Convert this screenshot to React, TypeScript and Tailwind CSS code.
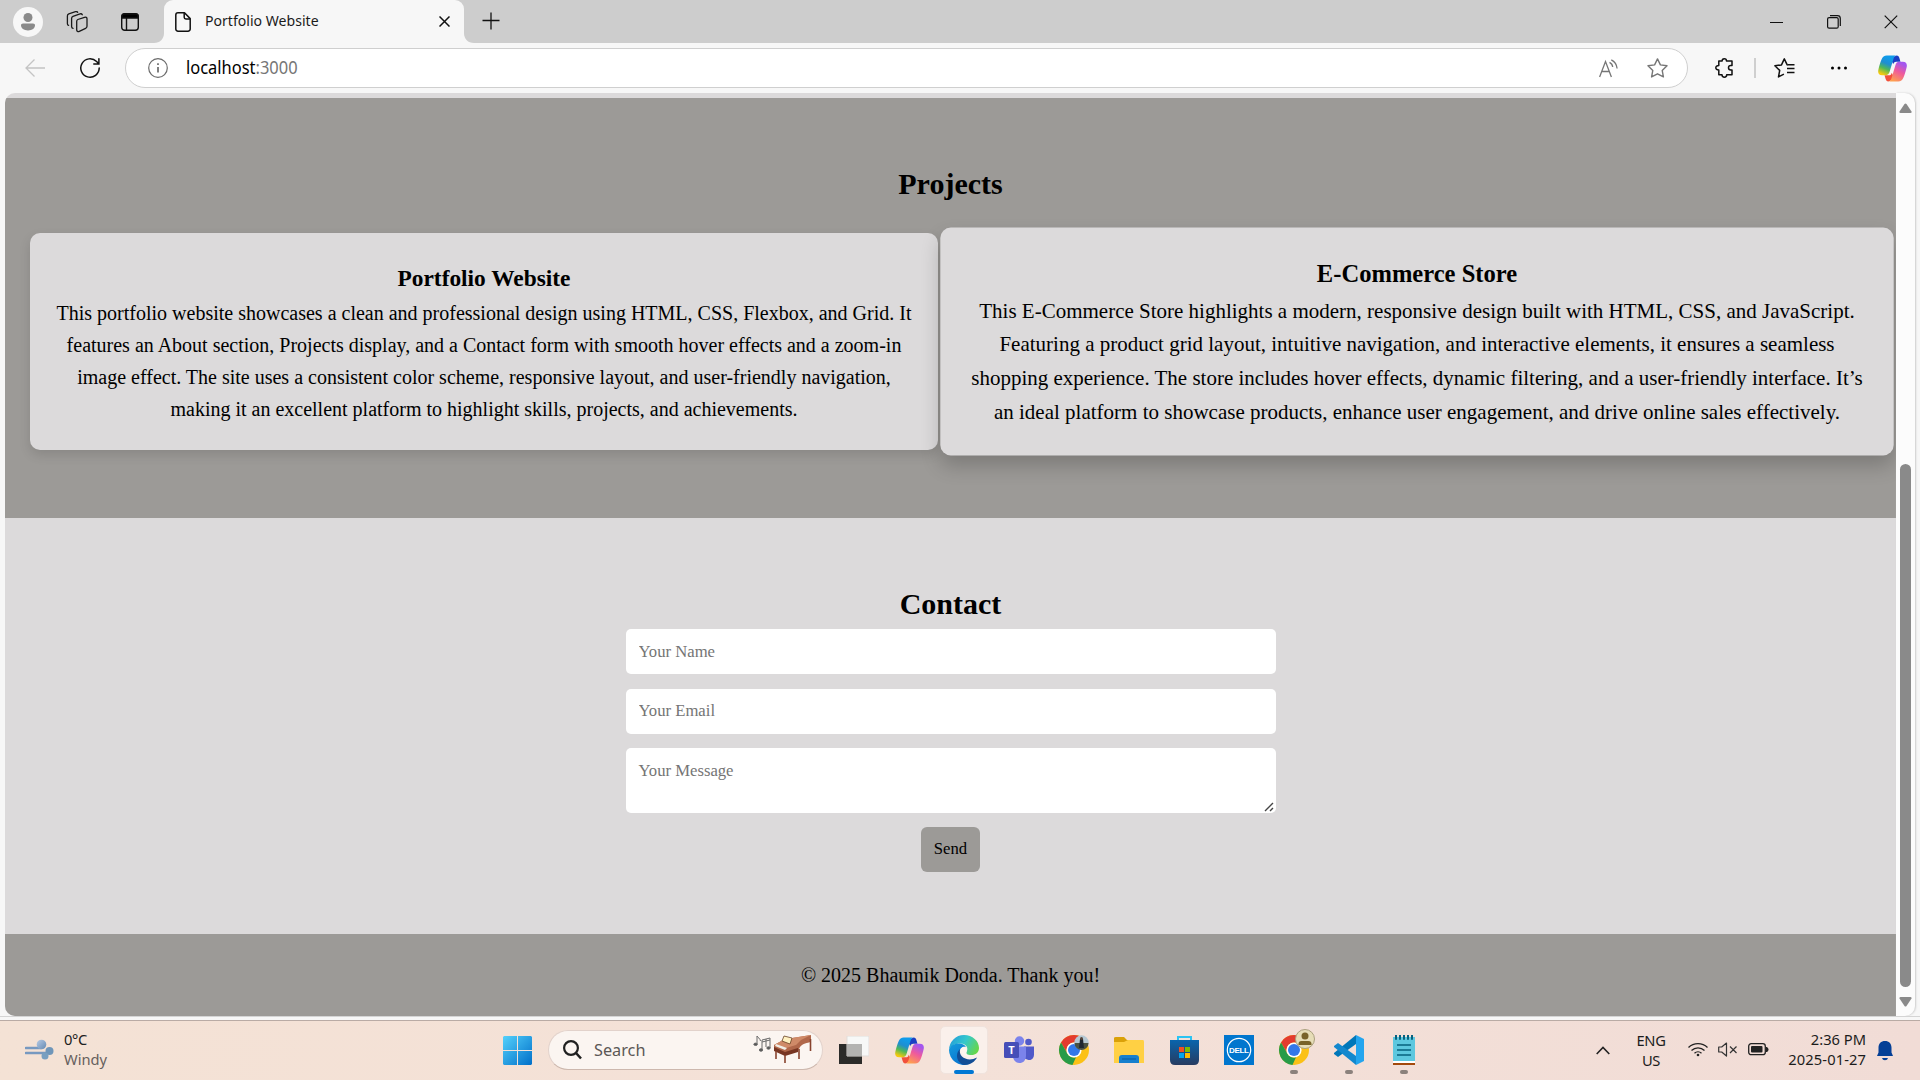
import React from "react";

const ui = "font-['Noto_Sans','Open_Sans',sans-serif]";

function CopilotLogo({ id, size }: { id: string; size: number }) {
  return (
    <svg width={size} height={size} viewBox="0 0 28 28" className="shrink-0">
      <defs>
        <linearGradient id={id + "a"} x1="0.6" y1="0" x2="0.2" y2="1">
          <stop offset="0.1" stopColor="#0f9bea" />
          <stop offset="0.4" stopColor="#1f8ed0" />
          <stop offset="0.65" stopColor="#4fb857" />
          <stop offset="0.95" stopColor="#f6c90e" />
        </linearGradient>
        <linearGradient id={id + "b"} x1="0.8" y1="0" x2="0.3" y2="1">
          <stop offset="0.1" stopColor="#a457ee" />
          <stop offset="0.5" stopColor="#ef5a9c" />
          <stop offset="1" stopColor="#ffa14d" />
        </linearGradient>
      </defs>
      <path d="M18 1.5c1.6 0 2.2 1 2.7 2.5l1 3.5h-4c-2 0-2.600 1-3 2.500L12 4Z" fill="#1a3fc4" />
      <path d="M10 26.500c-1.600 0-2.200-1-2.700-2.500l-1-3.500h4c2 0 2.600-1 3-2.500L16 24Z" fill="#f2503b" />
      <path d="M8.500 1.500h9.500c-1.800 0-2.600 1.600-3.100 3.300l-3.700 12.400c-.7 2.300-1.700 3.300-4 3.300H4C.8 20.500-.3 18.500.3 15.500c.6-3.200 1.900-7.300 3-10 1.200-2.900 2.700-4 5.200-4Z" fill={`url(#${id}a)`} />
      <path d="M19.500 26.500H10c1.800 0 2.600-1.600 3.100-3.300l3.700-12.400c.7-2.300 1.700-3.300 4-3.300H24c3.200 0 4.300 2 3.700 5-.6 3.200-1.900 7.300-3 10-1.200 2.900-2.700 4-5.200 4Z" fill={`url(#${id}b)`} />
    </svg>
  );
}

function TabStrip() {
  return (
    <div className="flex h-[43px] shrink-0 bg-[#cdcdcd]">
      <div className="flex w-[164px] items-center">
        <div className="ml-[13px] flex h-[30px] w-[30px] items-center justify-center rounded-full bg-[#f7f7f7]">
          <svg width="16" height="18" viewBox="0 0 16 18" fill="#8a8a8a">
            <circle cx="8" cy="4.500" r="4.500" />
            <path d="M3 10.500h10c1.200 0 2 .8 2 1.800 0 3-2.800 5.200-7 5.200s-7-2.200-7-5.200c0-1 .8-1.800 2-1.800Z" />
          </svg>
        </div>
        <svg className="ml-[23px]" width="23" height="22" viewBox="0 0 23 22" fill="none" stroke="#1a1a1a" strokeWidth="1.300" strokeLinejoin="round" strokeLinecap="round">
          <path d="m11.800 8.500 6.700-2.200c1.400-.4 2.500.2 2.500 1.500v7.400c0 1-.5 1.700-1.400 2.100l-6.300 3c-1.300.6-2.600 0-2.600-1.400v-8.500c0-1 .3-1.600 1.100-1.900Z" />
          <path d="M7 17.300c-1-.2-1.400-.9-1.400-1.800V7.400c0-1 .5-1.700 1.400-2.100l7-2.400c1-.3 1.900 0 2.300.8" />
          <path d="M2.600 14.400c-.9-.3-1.200-.9-1.200-1.700V5c0-1 .5-1.700 1.400-2.100l6.700-2.200c1-.3 1.800 0 2.200.6" />
        </svg>
        <svg className="ml-[32px]" width="18" height="18" viewBox="0 0 18 18" fill="none" stroke="#111" strokeWidth="1.400">
          <rect x="0.700" y="0.700" width="16.600" height="16.600" rx="3" />
          <path d="M1 3q0-2 2-2h12q2 0 2 2v2H1Z" fill="#000" />
          <path d="M5.500 5v12" />
        </svg>
      </div>
      <div className="relative flex w-[300px] items-center rounded-t-[9px] bg-[#f7f7f7]">
        <svg className="absolute bottom-0 -left-[10px]" width="10" height="10"><path d="M10 0v10H0C6 10 10 6 10 0Z" fill="#f7f7f7" /></svg>
        <svg className="absolute -right-[10px] bottom-0" width="10" height="10"><path d="M0 0v10h10C4 10 0 6 0 0Z" fill="#f7f7f7" /></svg>
        <svg className="ml-[11px]" width="16" height="20" viewBox="0 0 16 20" fill="none" stroke="#111" strokeWidth="1.500" strokeLinejoin="round">
          <path d="M3 .8h6.500l5.700 5.800V17a2.200 2.200 0 0 1-2.200 2.200H3A2.200 2.200 0 0 1 .8 17V3A2.200 2.200 0 0 1 3 .8Z" />
          <path d="M9.200 1v4.200c0 1.100.6 1.700 1.700 1.700H15" />
        </svg>
        <span className={`${ui} mb-[2px] ml-[14px] w-[234px] text-[14.600px] whitespace-nowrap text-[#1b1b1b]`}>
          <span className="inline-block origin-left scale-x-[0.965]">Portfolio Website</span>
        </span>
        <svg width="11" height="11" viewBox="0 0 11 11" stroke="#111" strokeWidth="1.500"><path d="m.5.5 10 10M10.500.5l-10 10" /></svg>
      </div>
      <svg className="mt-[12px] ml-[18px]" width="18" height="18" stroke="#111" strokeWidth="1.300"><path d="M9 .5v17M.5 8.500h17" /></svg>
      <div className="ml-auto flex items-center pr-[22px]">
        <svg width="13" height="14" stroke="#111" strokeWidth="1"><path d="M0 7.500h13" /></svg>
        <svg className="ml-[44px]" width="14" height="14" viewBox="0 0 14 14" fill="none" stroke="#111" strokeWidth="1.200">
          <rect x="0.600" y="2.600" width="10.600" height="10.600" rx="1.500" />
          <path d="M3 .7h7.500a2.800 2.800 0 0 1 2.800 2.800V11" />
        </svg>
        <svg className="ml-[43px]" width="14" height="14" stroke="#111" strokeWidth="1.200"><path d="m.7.700 12.500 12.500M13.200.7.700 13.200" /></svg>
      </div>
    </div>
  );
}

function Toolbar() {
  return (
    <div className="flex h-[50px] shrink-0 items-center bg-[#f7f7f7]">
      <svg className="ml-[25px]" width="20" height="18" viewBox="0 0 20 18" fill="none" stroke="#c4c4c4" strokeWidth="1.300"><path d="M9.500.5 1 9l8.500 8.500M1 9h19" /></svg>
      <svg className="ml-[35px]" width="20" height="20" viewBox="0 0 20 20" fill="none" stroke="#111" strokeWidth="1.500" strokeLinecap="round">
        <path d="M19.200 10a9.200 9.200 0 1 1-2.600-6.400L18.700 5.700M18.900.8v5.100h-5.100" />
      </svg>
      <div className="ml-[25px] flex h-[40px] w-[1563px] items-center rounded-full border border-[#cfcfcf] bg-white">
        <svg className="ml-[22px]" width="20" height="20" viewBox="0 0 20 20" fill="none" stroke="#6b6b6b" strokeWidth="1.200">
          <circle cx="10" cy="10" r="9.300" />
          <path d="M10 9v5.500M10 5.300v1.700" strokeWidth="1.700" />
        </svg>
        <span className={`${ui} mb-[2px] ml-[18px] w-[1413px] shrink-0 text-[17.500px] whitespace-nowrap text-black`}>
          <span className="inline-block origin-left scale-x-[0.94]">localhost<span className="text-[#767676]">:3000</span></span>
        </span>
        <svg className="shrink-0" width="20" height="19" viewBox="0 0 20 19" fill="none" stroke="#767676" strokeWidth="1.300">
          <path d="M.6 18 6.500 2.500 12.400 18M2.600 12.500h7.800M10.500 3.300c2 1 3 2.500 3.200 4.700M12.300.8c3.300 1.600 5.400 4.700 5.800 8.700" />
        </svg>
        <svg className="ml-[28px] shrink-0" width="21" height="20" viewBox="0 0 21 20" fill="none" stroke="#767676" strokeWidth="1.400" strokeLinejoin="round">
          <path d="m10.500.9 2.900 6 6.600.9-4.800 4.600 1.200 6.500-5.900-3.100-5.900 3.100 1.200-6.500L1 7.800l6.600-.9Z" />
        </svg>
      </div>
      <svg className="ml-[27px]" width="19" height="20" viewBox="0 0 19 20" fill="none" stroke="#111" strokeWidth="1.500" strokeLinejoin="round">
        <path d="M4.500 3h2.600c0-1.300.9-2.200 2.200-2.200s2.200.9 2.200 2.200H17v4.600h-1.200c-1.400 0-2.300.9-2.300 2.200s.9 2.200 2.300 2.200H17v4.800h-5.300c0 1.400-.9 2.400-2.300 2.400S7 18.200 7 16.800H3.800v-4.800C2 12 .8 11.200.8 9.800S2 7.600 3.800 7.600V3Z" />
      </svg>
      <div className="ml-[20px] h-[20px] w-[2px] bg-[#cfcfcf]" />
      <svg className="ml-[18px]" width="21" height="20" viewBox="0 0 21 20" fill="none" stroke="#111" strokeWidth="1.500" strokeLinejoin="round">
        <path d="M14 6.900l-.8-.1L10.300.9l-2.800 6-6.600.9 4.800 4.600-1.200 6.500 5.400-2.800M13 10.600h7.500M13 14.600h7.500M14 6.700h6.500" />
      </svg>
      <svg className="ml-[35px]" width="18" height="6"><circle cx="2.500" cy="3" r="1.500" /><circle cx="9" cy="3" r="1.500" /><circle cx="15.500" cy="3" r="1.500" /></svg>
      <div className="ml-[30px]"><CopilotLogo id="toolbar" size={29} /></div>
    </div>
  );
}

const portfolioText = [
  "This portfolio website showcases a clean and professional design using HTML, CSS, Flexbox, and Grid. It",
  "features an About section, Projects display, and a Contact form with smooth hover effects and a zoom-in",
  "image effect. The site uses a consistent color scheme, responsive layout, and user-friendly navigation,",
  "making it an excellent platform to highlight skills, projects, and achievements.",
];
const storeText = [
  "This E-Commerce Store highlights a modern, responsive design built with HTML, CSS, and JavaScript.",
  "Featuring a product grid layout, intuitive navigation, and interactive elements, it ensures a seamless",
  "shopping experience. The store includes hover effects, dynamic filtering, and a user-friendly interface. It’s",
  "an ideal platform to showcase products, enhance user engagement, and drive online sales effectively.",
];

function Project({ title, lines, raised }: { title: string; lines: string[]; raised?: boolean }) {
  return (
    <article className={`h-[217px] w-[908px] rounded-[10px] bg-[#dcdadb] text-center ${raised ? "z-10 scale-105 pt-[26px] shadow-[0_10px_19px_rgba(0,0,0,0.2)]" : "pt-[26.600px] shadow-[0_5px_12px_rgba(0,0,0,0.12)]"}`}>
      <h3 className="text-[23.400px] leading-[37.440px] font-bold">{title}</h3>
      {lines.map((line) => <p key={line} className="text-[20px] leading-[32px] whitespace-nowrap">{line}</p>)}
    </article>
  );
}

function Page() {
  return (
    <div className="flex h-[923px] shrink-0 bg-[#f7f7f7] pl-[5px]">
      <main className="flex w-[1891px] flex-col overflow-hidden rounded-l-[10px] bg-[#dcdadb] pt-[5px] font-['Liberation_Serif',serif] text-black">
        <section className="flex h-[420px] shrink-0 flex-col items-center bg-[#9c9a97] pt-[62px]">
          <h2 className="text-[30px] leading-[48px] font-bold">Projects</h2>
          <div className="mt-[25px] flex w-full gap-[25px] pl-[25px]">
            <Project title="Portfolio Website" lines={portfolioText} />
            <Project title="E-Commerce Store" lines={storeText} raised />
          </div>
        </section>
        <section className="flex h-[416px] shrink-0 flex-col items-center bg-[#dcdadb] pt-[62px]">
          <h2 className="mb-px text-[30px] leading-[48px] font-bold">Contact</h2>
          <form className="flex w-[650px] flex-col items-center">
            <input placeholder="Your Name" className="block h-[45px] w-full rounded-[5px] bg-white px-[13px] text-[16.670px] placeholder:text-[#757575]" />
            <input placeholder="Your Email" className="mt-[15px] block h-[45px] w-full rounded-[5px] bg-white px-[13px] pb-[2px] text-[16.670px] placeholder:text-[#757575]" />
            <div className="relative mt-[14px] h-[65px] w-full">
              <textarea placeholder="Your Message" className="block h-[65px] w-full resize-none rounded-[5px] bg-white px-[13px] py-[13px] text-[16.670px] leading-[19px] placeholder:text-[#757575]" />
              <svg className="absolute right-[2px] bottom-[1px]" width="10" height="10" stroke="#444" strokeWidth="1.400"><path d="M1 9 9 1M6 9l3-3" /></svg>
            </div>
            <button type="button" className="mt-[14px] h-[45px] w-[59px] rounded-[6px] bg-[#9c9a97] pb-[2px] text-[16.670px]">Send</button>
          </form>
        </section>
        <footer className="flex h-[82px] shrink-0 justify-center bg-[#9c9a97] pt-[25px] text-[20px] leading-[32px]">© 2025 Bhaumik Donda. Thank you!</footer>
      </main>
      <div className="flex w-[19px] flex-col items-center rounded-r-[10px] bg-[#fcfcfc] shadow-[1px_0_2px_#cccccc]">
        <svg className="mt-[10px]" width="13" height="11"><path d="M5.500 1Q6.500 0 7.500 1L12.500 8.500Q13 10 11.500 10H1.500Q0 10 .5 8.500Z" fill="#8a8a8a" /></svg>
        <div className="mt-[350px] h-[523px] w-[11px] rounded-full bg-[#8a8a8a]" />
        <svg className="mt-[10px]" width="13" height="11"><path d="M5.500 9Q6.500 10 7.500 9L12.500 1.500Q13 0 11.500 0H1.500Q0 0 .5 1.500Z" fill="#8a8a8a" /></svg>
      </div>
    </div>
  );
}

function PianoArt() {
  return (
    <svg width="60" height="30" viewBox="0 0 60 30" className="shrink-0">
      <g stroke="#6a6a6a" strokeWidth="1" fill="#555">
        <path d="M4 9V1c1 2 3 2 3.500 5M9 14V5l8-2v10M9 7l8-2M13 12V4" fill="none" />
        <ellipse cx="2.600" cy="9.300" rx="1.700" ry="1.200" /><ellipse cx="8" cy="15" rx="1.700" ry="1.200" /><ellipse cx="15.500" cy="13" rx="1.700" ry="1.200" />
      </g>
      <path d="m21 10 11-6 7-1 19-3v7c-4 1-8 1-11 5l-2 4-13 4-11-5Z" fill="#b0674a" />
      <path d="m21 10 11-6 7-1 19-3-10 5-5 5-10 3Z" fill="#cf8a68" />
      <path d="m21 12 11 5 13-4v4l-13 4-11-5Z" fill="#773522" />
      <path d="M23 16v8M32 20v8M46 14v10M57.500 4v12" stroke="#88442f" strokeWidth="1.600" />
      <path d="m23 9 11 4-2 2-10-4Z" fill="#f1eee7" />
      <path d="m31 1 8 2-2 6-8-3Z" fill="#fff0c0" stroke="#674023" strokeWidth=".8" />
    </svg>
  );
}

function Chrome({ children }: { children: React.ReactNode }) {
  return (
    <svg width="38" height="38" viewBox="0 0 38 38">
      <circle cx="16" cy="22" r="15" fill="#fbc116" />
      <path d="M3 14.500A15 15 0 0 1 29 14.500H16a7.500 7.500 0 0 0-6.500 11Z" fill="#e33b2e" />
      <path d="M3 14.500 9.500 25.800A7.500 7.500 0 0 0 18 29.200L14.500 37A15 15 0 0 1 3 14.500Z" fill="#289b48" />
      <circle cx="16" cy="22" r="7.600" fill="white" /><circle cx="16" cy="22" r="6" fill="#3478e8" />
      {children}
    </svg>
  );
}

function Edge() {
  return (
    <svg width="30" height="30" viewBox="0 0 30 30">
      <defs>
        <linearGradient id="edgeTop" x1="0" y1=".2" x2="1" y2=".6"><stop stopColor="#239bdb" /><stop offset=".5" stopColor="#35c8cc" /><stop offset="1" stopColor="#65d64b" /></linearGradient>
        <linearGradient id="edgeLeft" x1="0" y1="0" x2=".6" y2="1"><stop stopColor="#159ddd" /><stop offset="1" stopColor="#0873cf" /></linearGradient>
      </defs>
      <path d="M0 15A15 15 0 0 1 15 0c8.500 0 15 6 15 13 0 4.500-3.500 7-7.500 7-4.500 0-6-1.500-5-3 2.500-4-.5-8.500-6-8.500C6 8.500 1 11 0 15Z" fill="url(#edgeTop)" />
      <path d="M0 15c1-5 6-7 11-6.500 3 .3 5 1.800 6 3.500-3.500-1-6.500 1.500-6.500 5.500 0 6 4 11 9 11.700A15 15 0 0 1 0 15Z" fill="url(#edgeLeft)" />
      <path d="M11 14c-2 8 8 13.500 17 8.500-2 4-6.500 7.500-13 7.500-7-2-9.500-11-4-16Z" fill="#124e96" />
      <path d="M15 12c-2.500 0-3.500 2-3 4.500.8 4 6 6.500 11 4.500-4 0-6.500-1.500-5.500-4 .8-2 .5-4-2.500-5Z" fill="#fff5ef" />
    </svg>
  );
}

function Teams() {
  return (
    <svg width="30" height="28" viewBox="0 0 30 28">
      <circle cx="24.500" cy="6" r="3.300" fill="#5059c9" /><path d="M20 10.500h10v8c0 4-3 6-5.500 5.500L19 22Z" fill="#5059c9" />
      <circle cx="15.500" cy="5" r="4.700" fill="#7b83eb" /><path d="M9 10.500h13v9c0 5-3 7.500-6.500 7.500S9 24 9 20Z" fill="#7b83eb" />
      <rect y="6" width="15" height="16" rx="1.500" fill="#464eb8" />
      <text x="7.500" y="18" textAnchor="middle" fill="white" fontFamily="Open Sans, sans-serif" fontWeight="700" fontSize="11">T</text>
    </svg>
  );
}

function TaskIcon({ children, indicator = false, active = false }: { children: React.ReactNode; indicator?: boolean; active?: boolean }) {
  return (
    <div className={`relative flex h-[48px] w-[48px] shrink-0 items-center justify-center rounded-[5px] ${active ? "border border-[#f0e3dd] bg-[#faf0eb]" : ""}`}>
      {children}
      {active && <div className="absolute -bottom-px h-[4px] w-[20px] rounded-full bg-[#0078d4]" />}
      {indicator && <div className="absolute bottom-0 h-[4px] w-[8px] rounded-full bg-[#8b817c]" />}
    </div>
  );
}

function Taskbar() {
  return (
    <div className={`${ui} flex h-[60px] shrink-0 border-t border-[#b9aba5] bg-linear-to-r from-[#f4e2d5] via-[#f4e1d8] to-[#f1dcd6] text-[15px]`}>
      <div className="flex w-[500px] shrink-0 pl-[25px]">
        <svg className="mt-[18px]" width="29" height="21" viewBox="0 0 29 21">
          <defs><linearGradient id="wind" x1="0" y1="0" x2="1" y2="1"><stop stopColor="#b7cbe5" /><stop offset="1" stopColor="#6389b2" /></linearGradient></defs>
          <path d="M1 9h15M1 14h20" stroke="#7799c0" strokeWidth="2.600" strokeLinecap="round" />
          <circle cx="16.500" cy="5.500" r="4.800" fill="url(#wind)" /><circle cx="24.500" cy="12" r="4" fill="#6f96b9" /><circle cx="20" cy="17" r="3.500" fill="#789fc0" />
        </svg>
        <div className="mt-[8px] ml-[10px] text-[14.700px] leading-[20px] text-[#202020]"><div className="-tracking-[.4px]">0°C</div><div className="text-[#66605d]">Windy</div></div>
      </div>
      <div className="flex shrink-0 pt-[5px]">
        <svg className="mt-[10px] ml-[3px] shrink-0" width="29" height="29"><defs><linearGradient id="win" x1="0" y1="0" x2="1" y2="1"><stop stopColor="#54d1fb" /><stop offset="1" stopColor="#006fc9" /></linearGradient></defs><path d="M1 0h13v14H0V1ZM15 0h13l1 1v13H15ZM0 15h14v14H1l-1-1ZM15 15h14v13l-1 1H15Z" fill="url(#win)" /></svg>
        <div className="mt-[4px] ml-[16px] flex h-[40px] w-[275px] shrink-0 items-center rounded-full border border-[#e2d2cb] border-b-[#cdb8ae] bg-[#fbf5f1]">
          <svg className="ml-[14px] shrink-0" width="19" height="20" viewBox="0 0 19 20" fill="none" stroke="#202020" strokeWidth="2.200"><circle cx="8" cy="8" r="6.900" /><path d="m13 13 5 5.500" strokeWidth="2.600" /></svg>
          <span className="ml-[12px] w-[159px] shrink-0 text-[16.500px] text-[#5c5856]"><span className="inline-block origin-left scale-x-[0.985]">Search</span></span>
          <PianoArt />
        </div>
        <div className="ml-[7px] flex gap-[7px]">
          <TaskIcon><svg width="30" height="28"><path d="M0 8h23v20H0Z" fill="#2b2b29" /><path d="M8 0h22v20H8Z" fill="#f7f8f7" stroke="#e1ddda" /><path d="M8 8h15v12H8Z" fill="#b3b3b1" /></svg></TaskIcon>
          <TaskIcon><CopilotLogo id="dock" size={29} /></TaskIcon>
          <TaskIcon active><Edge /></TaskIcon>
          <TaskIcon><Teams /></TaskIcon>
          <TaskIcon>
            <div className="-mt-[6px] ml-[6px]"><Chrome><circle cx="23.500" cy="14.500" r="7.200" fill="#b5c7d2" /><path d="M16.500 15h14a7 7 0 0 1-14 0Z" fill="#4a5142" /><path d="M22 11h3l1 9h-5Z" fill="#202831" /><circle cx="23.500" cy="10.500" r="1.500" fill="#554238" /></Chrome></div>
          </TaskIcon>
          <TaskIcon><svg width="30" height="27"><path d="M0 1q0-1 2-1h8l3 3h16v8H0Z" fill="#daa109" /><path d="M0 5h10l4-2h15q1 0 1 2v21H0Z" fill="#ffd044" /><path d="M5 26v-5q0-3 3-3h14q3 0 3 3v5Z" fill="#167fce" /><path d="M8 22h14" stroke="#075b9f" /></svg></TaskIcon>
          <TaskIcon>
            <svg width="29" height="29"><defs><linearGradient id="store" x1="0" y1="0" x2="0" y2="1"><stop stopColor="#0965ad" /><stop offset="1" stopColor="#273b60" /></linearGradient></defs><path d="M8 5V1h13v4" fill="none" stroke="#2cc3f2" strokeWidth="2" /><path d="M0 4h29v20q0 5-5 5H5q-5 0-5-5Z" fill="url(#store)" /><path d="M9 11h5v5H9Z" fill="#f15022" /><path d="M15 11h5v5h-5Z" fill="#7fbb00" /><path d="M9 17h5v5H9Z" fill="#02a4ef" /><path d="M15 17h5v5h-5Z" fill="#ffb901" /></svg>
          </TaskIcon>
          <TaskIcon><svg width="30" height="30"><path d="M0 0h30v30H0Z" fill="#0076ce" /><circle cx="15" cy="15" r="11.700" fill="none" stroke="white" strokeWidth="1.200" /><text x="15" y="18" fontFamily="Liberation Sans, sans-serif" fontWeight="700" fontSize="8" textLength="20" textAnchor="middle" fill="white">DELL</text></svg></TaskIcon>
          <TaskIcon indicator><div className="-mt-[6px] ml-[6px]"><Chrome><circle cx="27" cy="11" r="9.500" fill="#e6ddb7" stroke="#aaa07e" /><circle cx="27" cy="8" r="3.500" fill="#786329" /><path d="M20.500 17v-1q0-3 3-3h7q3 0 3 3v1Z" fill="#786329" /></Chrome></div></TaskIcon>
          <TaskIcon indicator><svg width="30" height="30"><path d="m22 0 8 4v22l-8 4Z" fill="#24a5ee" /><path d="M22 0v9L4 22l-4-3v-1Z" fill="#0077b9" /><path d="m0 11 4-3 18 13v9L0 12Z" fill="#1388ce" /></svg></TaskIcon>
          <TaskIcon indicator><svg width="22" height="30"><path d="M0 2h22v26H0Z" fill="#5ec8df" /><path d="M0 26h22v2H0Z" fill="white" /><path d="M0 28h22v2H0Z" fill="#a3490c" /><path d="M4 10h14M4 15h14M4 20h14" stroke="#07617f" strokeWidth="1.700" /><path d="M3 0v4M7 0v4M11 0v4M15 0v4M19 0v4" stroke="#07617f" strokeWidth="2" strokeLinecap="round" /></svg></TaskIcon>
        </div>
      </div>
      <div className="ml-auto flex shrink-0 text-[14.700px] leading-[20px] text-[#1c1c1c]">
        <svg className="mt-[25px]" width="14" height="9" fill="none" stroke="#222" strokeWidth="1.600"><path d="m.7 8 6.300-6.500L13.300 8" /></svg>
        <div className="mt-[9px] ml-[23px] w-[36px] text-center -tracking-[.3px]">ENG<br />US</div>
        <svg className="mt-[20px] ml-[19px]" width="20" height="16" viewBox="0 0 20 16" fill="none" stroke="#222" strokeWidth="1.300"><path d="M.5 6.500a13.500 13.500 0 0 1 19 0M3.500 9.500a9.200 9.200 0 0 1 13 0M6.500 12.300a5 5 0 0 1 7 0" /><circle cx="10" cy="14" r="1.300" fill="#222" stroke="none" /></svg>
        <svg className="mt-[21px] ml-[10px]" width="20" height="15" viewBox="0 0 20 15" fill="none" stroke="#333" strokeWidth="1.200" strokeLinejoin="round"><path d="M.7 5v5h3l4.800 4V1L3.700 5ZM12 4.500l6.500 6.500M18.500 4.500 12 11" /></svg>
        <svg className="mt-[22px] ml-[10px]" width="21" height="13" viewBox="0 0 21 13"><rect x="0.700" y="0.700" width="16.600" height="11" rx="2.500" fill="none" stroke="#222" strokeWidth="1.300" /><rect x="3" y="3" width="11.500" height="6.500" rx="1" fill="#222" /><path d="M18 4h1q1.500 1 1.500 2.500T19 9h-1Z" fill="#222" /></svg>
        <div className="mt-[8px] ml-[18px] flex w-[79px] flex-col items-end whitespace-nowrap"><span>2:36 PM</span><span className="tracking-[.1px]">2025-01-27</span></div>
        <svg className="mt-[20px] mr-[27px] ml-[11px]" width="16" height="20" viewBox="0 0 16 20" fill="#043f96"><path d="M8 0c4 0 6.500 2.700 6.500 6.500v5l1.500 3.500H0l1.500-3.500v-5C1.500 2.700 4 0 8 0ZM5 17h6q-.5 2.300-3 2.300T5 17Z" /></svg>
      </div>
    </div>
  );
}

export default function App() {
  return (
    <div className="flex h-[1080px] w-[1920px] flex-col overflow-hidden bg-[#f7f7f7]">
      <TabStrip />
      <Toolbar />
      <Page />
      <div className="h-[4px] shrink-0 border-t border-[#d4d4d4] bg-[#f7f7f7]" />
      <Taskbar />
    </div>
  );
}
